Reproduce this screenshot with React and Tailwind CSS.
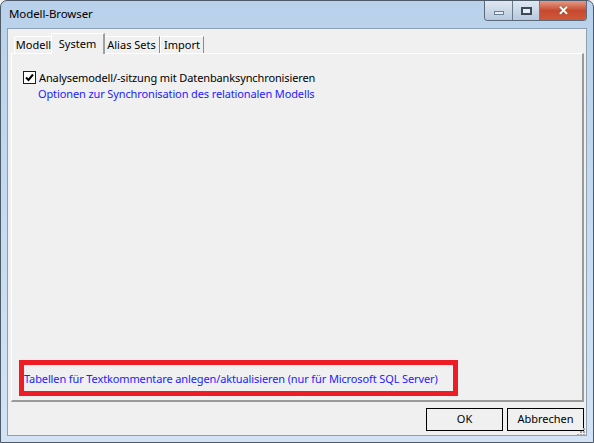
import React from "react";

const font = { fontFamily: '"Noto Sans", "Open Sans", sans-serif' };

function Tab({ label, selected, w }) {
  if (selected) {
    return (
      <div className={`relative z-10 -mx-[2px] h-[21px] ${w} pt-[2px] bg-[#f0f0f0] border-t border-l border-white border-r-[2px] border-r-[#a0a0a0] text-[11px] leading-[15px] text-black text-center`}>
        {label}
      </div>
    );
  }
  return (
    <div className={`mt-[3px] h-[17px] ${w} bg-[#f0f0f0] border-t border-l border-white border-r border-r-[#8a8a8a] text-[11px] leading-[15px] text-black text-center`}>
      {label}
    </div>
  );
}

export default function App() {
  return (
    <div className="w-[594px] h-[443px] bg-[#f0f0f0]" style={font}>
      <div className="w-[594px] h-[443px] flex flex-col rounded-t-[7px] border border-[#4d5a6a] bg-gradient-to-b from-[#b9d1ea] via-[#c6dbf1] to-[#d3e3f5]">
        {/* title bar */}
        <div className="h-[27px] flex items-start">
          <div className="pl-[8px] pt-[5px] text-[11.5px] leading-[15px] text-black tracking-[-0.1px]">Modell-Browser</div>
          <div className="ml-auto mr-[6px] flex h-[20px] rounded-b-[4px] border border-t-0 border-[#5a6a7c] overflow-hidden">
            <div className="w-[28px] h-full bg-gradient-to-b from-[#dfe8f2] to-[#b8c9dc] border-r border-[#6b7a8b] flex items-center justify-center">
              <div className="w-[10px] h-[4px] mt-[4px] bg-[#e8eef5] border border-[#6b7f96]" />
            </div>
            <div className="w-[27px] h-full bg-gradient-to-b from-[#dfe8f2] to-[#b8c9dc] border-r border-[#6b7a8b] flex items-center justify-center">
              <div className="w-[11px] h-[8px] border-[2px] border-[#3c4a5a] bg-[#e8eef5]" />
            </div>
            <div className="w-[46px] h-full bg-gradient-to-b from-[#e49a86] via-[#c74a2e] to-[#d0573a] flex items-center justify-center text-white text-[13px] font-bold leading-none">
              <span className="[text-shadow:0_0_1px_#333]">✕</span>
            </div>
          </div>
        </div>
        {/* client */}
        <div className="flex-1 mx-[6px] mb-[6px] border border-[#8d9fb3] bg-[#f0f0f0] flex flex-col pl-[3px] pr-[2px] pt-[4px]">
          <div className="flex pl-[3px] h-[20px]">
            <Tab label="Modell" w="w-[39px]" />
            <Tab label="System" w="w-[54px]" selected />
            <Tab label="Alias Sets" w="w-[57px]" />
            <Tab label="Import" w="w-[44px]" />
          </div>
          <div className="h-[349px] border-t border-l border-white border-r-[2px] border-b-[2px] border-r-[#9a9a9a] border-b-[#9a9a9a] bg-[#f0f0f0] flex flex-col">
            <div className="pl-[11px] pt-[16px] flex items-center gap-[3px]">
              <div className="w-[13px] h-[13px] border border-[#1c1c1c] bg-white flex items-center justify-center">
                <svg width="9" height="9" viewBox="0 0 9 9">
                  <path d="M1 4.5 L3.5 7 L8 1.5" stroke="#000" strokeWidth="2" fill="none" />
                </svg>
              </div>
              <span className="text-[11px] leading-[15px] text-black tracking-[-0.12px]">Analysemodell/-sitzung mit Datenbanksynchronisieren</span>
            </div>
            <div className="pl-[26px] pt-[1px] text-[11px] leading-[15px] text-[#2222ff] tracking-[-0.12px]">
              Optionen zur Synchronisation des relationalen Modells
            </div>
            <div className="mt-auto mb-[4px] ml-[7px] w-[439px] h-[36px] border-[5px] border-[#ee1c24] flex items-center">
              <span className="text-[11px] leading-[15px] text-[#2222ff] whitespace-nowrap tracking-[-0.12px]">
                Tabellen für Textkommentare anlegen/aktualisieren (nur für Microsoft SQL Server)
              </span>
            </div>
          </div>
          <div className="flex justify-end gap-[4px] pt-[6px] relative">
            <div className="w-[77px] h-[23px] border border-black bg-[#f0f0f0] flex items-center justify-center text-[11px] text-black">OK</div>
            <div className="w-[77px] h-[23px] border border-black bg-[#f0f0f0] flex items-center justify-center text-[11px] text-black">Abbrechen</div>
            <svg className="absolute right-[-2px] bottom-[-6px]" width="12" height="12" viewBox="0 0 12 12">
              <g fill="#a0a0a0">
                <rect x="9" y="3" width="2" height="2" />
                <rect x="6" y="6" width="2" height="2" />
                <rect x="9" y="6" width="2" height="2" />
                <rect x="3" y="9" width="2" height="2" />
                <rect x="6" y="9" width="2" height="2" />
                <rect x="9" y="9" width="2" height="2" />
              </g>
            </svg>
          </div>
        </div>
      </div>
    </div>
  );
}
